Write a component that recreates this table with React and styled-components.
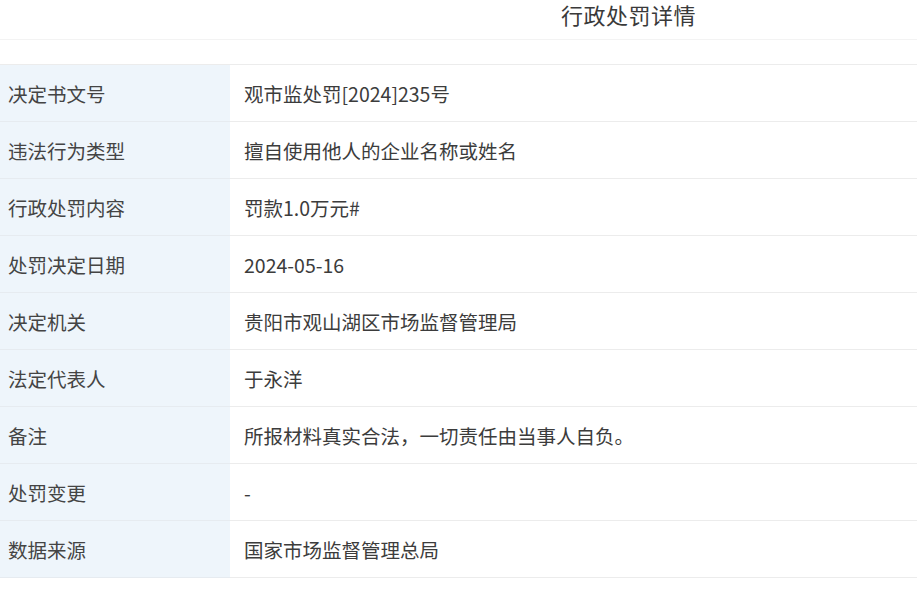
import React from "react";
import styled, { createGlobalStyle } from "styled-components";

const Global = createGlobalStyle`
  html, body { margin: 0; padding: 0; background: #fff; }
  body { font-family: "Noto Sans CJK SC", "Noto Sans", sans-serif; color: #333; }
`;

const Page = styled.div`
  width: 917px;
  height: 600px;
  overflow: hidden;
  display: flex;
  flex-direction: column;
`;

const Header = styled.header`
  height: 40px;
  box-sizing: border-box;
  border-bottom: 1px solid #f3f3f3;
  display: flex;
  justify-content: center;
  align-items: flex-start;
  padding-top: 1px;
  padding-left: 340px;
  margin-bottom: 24px;
`;

const Title = styled.h1`
  margin: 0;
  font-size: 22px;
  font-weight: 400;
  line-height: 26px;
  color: #3a3a3a;
  letter-spacing: 0.5px;
`;

const Table = styled.div`
  display: grid;
  grid-template-columns: 230px 1fr;
  border-top: 1px solid #ececec;
`;

const Label = styled.div`
  height: 57px;
  box-sizing: border-box;
  display: flex;
  align-items: center;
  padding-left: 8px;
  background: #eef5fb;
  border-bottom: 1px solid #e6ebf0;
  font-size: 19.5px;
  color: #444;
`;

const Value = styled.div`
  height: 57px;
  box-sizing: border-box;
  display: flex;
  align-items: center;
  padding-left: 14px;
  background: #fff;
  border-bottom: 1px solid #ececec;
  font-size: 19.5px;
  color: #3c3c3c;
`;

const rows = [
  ["决定书文号", "观市监处罚[2024]235号"],
  ["违法行为类型", "擅自使用他人的企业名称或姓名"],
  ["行政处罚内容", "罚款1.0万元#"],
  ["处罚决定日期", "2024-05-16"],
  ["决定机关", "贵阳市观山湖区市场监督管理局"],
  ["法定代表人", "于永洋"],
  ["备注", "所报材料真实合法，一切责任由当事人自负。"],
  ["处罚变更", "-"],
  ["数据来源", "国家市场监督管理总局"],
];

export default function App() {
  return (
    <Page>
      <Global />
      <Header>
        <Title>行政处罚详情</Title>
      </Header>
      <Table>
        {rows.map(([k, v]) => (
          <React.Fragment key={k}>
            <Label>{k}</Label>
            <Value>{v}</Value>
          </React.Fragment>
        ))}
      </Table>
    </Page>
  );
}
